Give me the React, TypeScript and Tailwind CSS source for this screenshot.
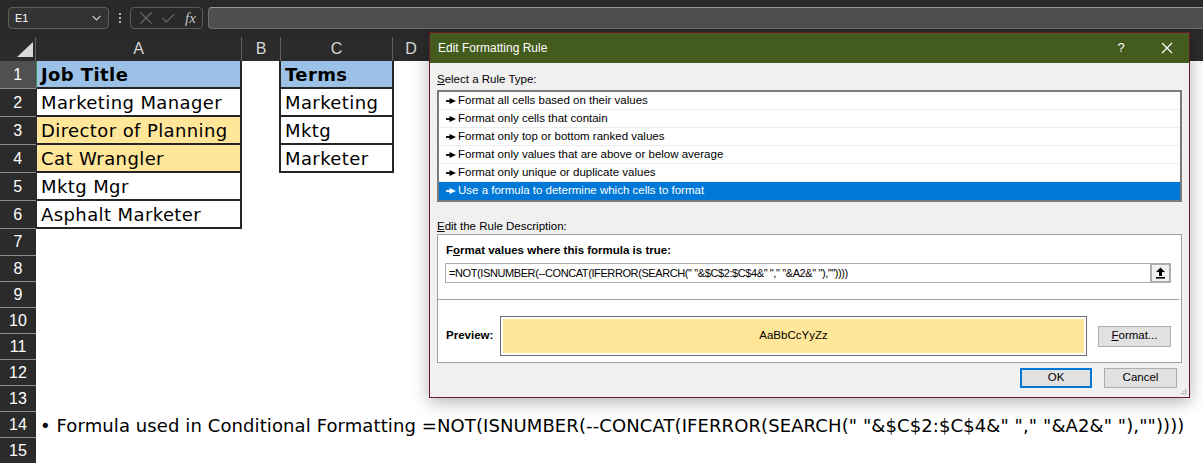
import React from 'react';

type SheetRow = {
  n: number;
  a?: string;
  aBg?: string;
  c?: string;
  cBg?: string;
  bold?: boolean;
};

const formula = '=NOT(ISNUMBER(--CONCAT(IFERROR(SEARCH(" "&$C$2:$C$4&" "," "&A2&" "),""))))';

const tableRows: SheetRow[] = [
  { n: 1, a: 'Job Title', aBg: 'bg-[#9bc2e6]', c: 'Terms', cBg: 'bg-[#9bc2e6]', bold: true },
  { n: 2, a: 'Marketing Manager', aBg: 'bg-white', c: 'Marketing', cBg: 'bg-white' },
  { n: 3, a: 'Director of Planning', aBg: 'bg-[#ffe699]', c: 'Mktg', cBg: 'bg-white' },
  { n: 4, a: 'Cat Wrangler', aBg: 'bg-[#ffe699]', c: 'Marketer', cBg: 'bg-white' },
  { n: 5, a: 'Mktg Mgr', aBg: 'bg-white' },
  { n: 6, a: 'Asphalt Marketer', aBg: 'bg-white' },
];

const ruleTypes = [
  'Format all cells based on their values',
  'Format only cells that contain',
  'Format only top or bottom ranked values',
  'Format only values that are above or below average',
  'Format only unique or duplicate values',
  'Use a formula to determine which cells to format',
];

function RowHead({ n, active }: { n: number; active?: boolean }) {
  return (
    <div
      className={`w-[36px] shrink-0 flex items-center justify-center border-b border-[#8d8d8d] text-[16px] text-white font-['Liberation_Sans',Arial,sans-serif] ${
        active ? 'bg-[#505050]' : 'bg-[#2b2b2b]'
      }`}
    >
      {n}
    </div>
  );
}

function RuleArrow() {
  return (
    <svg width="10" height="8" viewBox="0 0 10 8" className="shrink-0">
      <path d="M0 4h4.5" stroke="currentColor" strokeWidth="1.8" />
      <path d="M3.5 1L10 4L3.5 7Z" fill="currentColor" />
    </svg>
  );
}

function Dialog() {
  return (
    <div className="absolute left-[429px] top-[32px] w-[761px] h-[366px] border border-[#6b1a2e] bg-[#f0f0f0] shadow-[0_4px_16px_rgba(0,0,0,0.3)] flex flex-col font-['Liberation_Sans',Arial,sans-serif] text-[11.5px] text-black">
      {/* title bar */}
      <div className="h-[30px] shrink-0 bg-[#435b1d] flex items-center text-white">
        <span className="flex-1 pl-[8px] text-[12px]">Edit Formatting Rule</span>
        <span className="w-[46px] text-center text-[13px]">?</span>
        <span className="w-[45px] flex justify-center">
          <svg width="12" height="12" viewBox="0 0 12 12">
            <path d="M1 1L11 11M11 1L1 11" stroke="white" strokeWidth="1.2" />
          </svg>
        </span>
      </div>

      <div className="flex flex-col px-[7px]">
        <div className="mt-[9px] h-[14px] leading-[14px]">
          <span className="underline">S</span>elect a Rule Type:
        </div>

        <div className="mt-[4px] h-[112px] border-2 border-[#7a7a7a] bg-white flex flex-col">
          {ruleTypes.map((t, i) => {
            const selected = i === ruleTypes.length - 1;
            return (
              <div
                key={t}
                className={`h-[18px] shrink-0 flex items-center gap-[2px] pl-[7px] ${
                  selected ? 'bg-[#0078d7] text-white' : 'border-b border-[#ececec]'
                }`}
              >
                <RuleArrow />
                <span>{t}</span>
              </div>
            );
          })}
        </div>

        <div className="mt-[17px] h-[14px] leading-[14px]">
          <span className="underline">E</span>dit the Rule Description:
        </div>

        <div className="mt-[1px] h-[129px] border border-[#a0a0a0] bg-white flex flex-col">
          <div className="mt-[8px] h-[14px] leading-[14px] pl-[8px] font-bold">
            F<span className="underline">o</span>rmat values where this formula is true:
          </div>
          <div className="mt-[6px] ml-[7px] mr-[10px] h-[20px] border border-[#acacac] flex items-center">
            <span className="flex-1 pl-[3px] whitespace-pre text-[11px] tracking-[-0.4px]">{formula}</span>
            <div className="w-[21px] h-[20px] -mr-px border-2 border-[#adadad] bg-[#f0f0f0] flex items-center justify-center">
              <svg width="11" height="12" viewBox="0 0 11 12">
                <path d="M5.5 0.5L1 5h3v4h3V5h3Z" fill="black" />
                <rect x="1" y="10" width="9" height="1.6" fill="black" />
              </svg>
            </div>
          </div>
          <div className="mt-[16px] mr-[2px] h-px bg-[#a0a0a0]" />
          <div className="mt-[16px] flex items-center">
            <div className="w-[62px] pl-[8px] font-bold">Preview:</div>
            <div className="w-[587px] h-[40px] border border-[#6d6d6d] p-[2px]">
              <div className="h-full bg-[#ffe699] flex items-center justify-center">AaBbCcYyZz</div>
            </div>
            <div className="ml-[11px] w-[73px] h-[21px] border border-[#adadad] bg-[#e1e1e1] flex items-center justify-center">
              <span className="underline">F</span>ormat...
            </div>
          </div>
        </div>

        <div className="mt-[5px] flex justify-end gap-[12px] mr-[5px]">
          <div className="w-[72px] h-[20px] border-2 border-[#0078d7] bg-[#e1e1e1] flex items-center justify-center">OK</div>
          <div className="w-[73px] h-[20px] border border-[#adadad] bg-[#e1e1e1] flex items-center justify-center">Cancel</div>
        </div>
      </div>

      <svg width="6" height="6" viewBox="0 0 6 6" className="absolute right-[2px] bottom-[2px]">
        <rect x="4" y="0" width="1.5" height="1.5" fill="#b0b0b0" />
        <rect x="2" y="2" width="1.5" height="1.5" fill="#b0b0b0" />
        <rect x="4" y="2" width="1.5" height="1.5" fill="#b0b0b0" />
        <rect x="0" y="4" width="1.5" height="1.5" fill="#b0b0b0" />
        <rect x="2" y="4" width="1.5" height="1.5" fill="#b0b0b0" />
        <rect x="4" y="4" width="1.5" height="1.5" fill="#b0b0b0" />
      </svg>
    </div>
  );
}

export default function App() {
  const lowerRows = [7, 8, 9, 10, 11, 12, 13, 14, 15];

  return (
    <div className="relative w-[1203px] h-[463px] overflow-hidden bg-white">
      {/* formula bar */}
      <div className="h-[37px] bg-[#292929] flex items-start pt-[7px] pl-[8px] font-['Liberation_Sans',Arial,sans-serif]">
        <div className="w-[101px] h-[22px] rounded-[4px] border border-[#5e5e5e] bg-[#333333] flex items-center justify-between pl-[6px] pr-[7px] text-[11px] text-white">
          <span>E1</span>
          <svg width="9" height="6" viewBox="0 0 9 6">
            <path d="M0.5 0.8L4.5 4.8L8.5 0.8" stroke="#cfcfcf" strokeWidth="1.2" fill="none" />
          </svg>
        </div>
        <div className="w-[21px] h-[22px] flex flex-col items-center justify-center gap-[2px]">
          <span className="w-[2px] h-[2px] bg-[#b5b5b5]" />
          <span className="w-[2px] h-[2px] bg-[#b5b5b5]" />
          <span className="w-[2px] h-[2px] bg-[#b5b5b5]" />
        </div>
        <div className="w-[73px] h-[22px] rounded-[4px] border border-[#5a5a5a] flex items-center pl-[9px] gap-[10px]">
          <svg width="12" height="12" viewBox="0 0 12 12">
            <path d="M0.5 0.5L11.5 11.5M11.5 0.5L0.5 11.5" stroke="#6b6b6b" strokeWidth="1.1" />
          </svg>
          <svg width="13" height="10" viewBox="0 0 13 10">
            <path d="M0.5 5L4.5 9L12.5 0.8" stroke="#6b6b6b" strokeWidth="1.1" fill="none" />
          </svg>
          <span className="font-['Liberation_Serif',serif] italic text-[15px] text-[#c4c4c4] leading-none">fx</span>
        </div>
        <div className="ml-[5px] flex-1 h-[22px] rounded-l-[4px] border border-r-0 border-[#6f6f6f] border-t-[#9a9a9a] bg-[#4e4e4e]" />
      </div>

      {/* column headers */}
      <div className="h-[24px] bg-[#2b2b2b] flex text-[16px] text-[#d6d6d6] font-['Liberation_Sans',Arial,sans-serif]">
        <div className="w-[36px] shrink-0 border-r border-[#5f5f5f] relative">
          <svg width="36" height="24" viewBox="0 0 36 24" className="absolute left-0 top-0">
            <path d="M33 5V20H17Z" fill="#d9d9d9" />
          </svg>
        </div>
        <div className="w-[206px] shrink-0 border-r border-[#5f5f5f] flex items-center justify-center">A</div>
        <div className="w-[39px] shrink-0 border-r border-[#5f5f5f] flex items-center justify-center">B</div>
        <div className="w-[112px] shrink-0 border-r border-[#5f5f5f] flex items-center justify-center">C</div>
        <div className="w-[37px] shrink-0 border-r border-[#5f5f5f] flex items-center justify-center">D</div>
        <div className="flex-1" />
      </div>

      {/* sheet rows */}
      <div className="flex flex-col font-['DejaVu_Sans',sans-serif] text-[18px] text-black">
        {tableRows.map((r) => (
          <div key={r.n} className="flex h-[28px] tracking-[0.4px]">
            <RowHead n={r.n} active={r.n === 1} />
            <div
              className={`w-[206px] shrink-0 flex items-center pl-[4px] border-l border-r-2 border-b-2 border-[#262626] whitespace-nowrap ${r.aBg} ${
                r.bold ? 'font-bold border-l-[#3d8b4a]' : ''
              }`}
            >
              {r.a}
            </div>
            <div className="w-[37px] shrink-0" />
            {r.c ? (
              <div
                className={`w-[115px] shrink-0 flex items-center pl-[4px] border-l-2 border-r-2 border-b-2 border-[#262626] whitespace-nowrap ${r.cBg} ${
                  r.bold ? 'font-bold' : ''
                }`}
              >
                {r.c}
              </div>
            ) : null}
            <div className="flex-1" />
          </div>
        ))}
        {lowerRows.map((n) => (
          <div key={n} className={`flex ${n === 7 ? 'h-[27px]' : 'h-[26px]'}`}>
            <RowHead n={n} />
            <div className="flex-1 flex items-center pl-[4px] whitespace-nowrap tracking-[0.1px]">
              {n === 14 ? `• Formula used in Conditional Formatting ${formula}` : ''}
            </div>
          </div>
        ))}
      </div>

      <Dialog />
    </div>
  );
}
